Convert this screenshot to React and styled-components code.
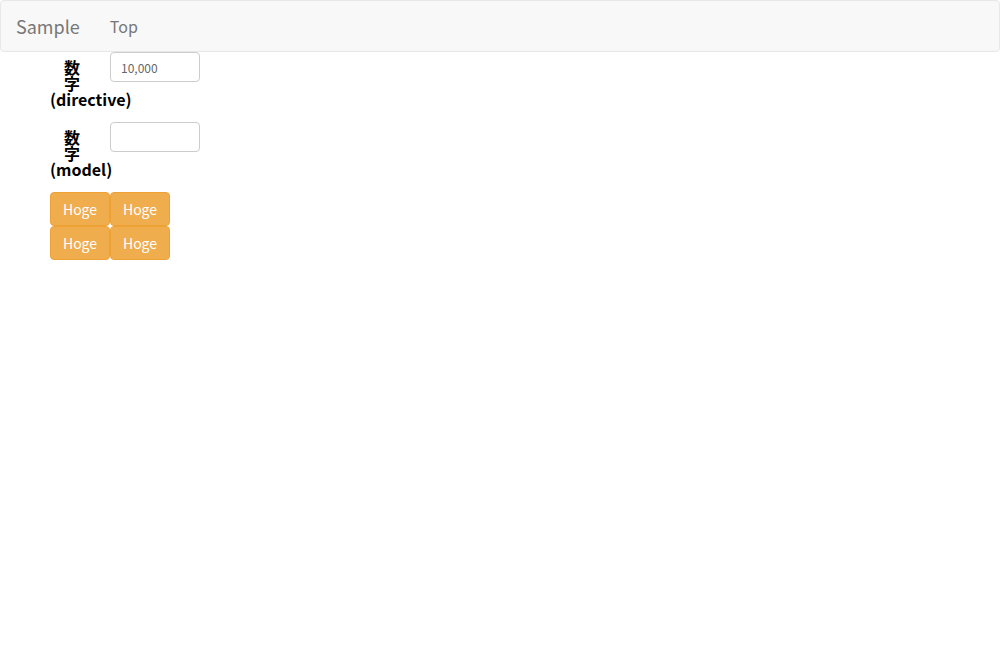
import React from "react";
import styled, { createGlobalStyle } from "styled-components";

const GlobalStyle = createGlobalStyle`
  body {
    margin: 0;
    font-family: "Noto Sans CJK JP", "Open Sans", sans-serif;
    font-size: 14px;
    color: #333;
    background: #fff;
  }
`;

const Navbar = styled.nav`
  display: flex;
  align-items: center;
  height: 50px;
  background: #f8f8f8;
  border: 1px solid #e7e7e7;
  border-radius: 4px;
`;

const Brand = styled.a`
  padding: 0 15px;
  font-size: 18px;
  line-height: 50px;
  color: #777;
  text-decoration: none;
`;

const NavLink = styled.a`
  padding: 0 15px;
  font-size: 16px;
  line-height: 50px;
  color: #777;
  text-decoration: none;
`;

const Main = styled.div`
  padding: 0 50px;
`;

const Row = styled.div`
  display: flex;
  margin-bottom: 15px;
`;

const Label = styled.label`
  flex: none;
  width: 30px;
  margin-right: 30px;
  padding-top: 7px;
  font-size: 16px;
  font-weight: 700;
  line-height: 16px;
  color: #000;
  text-align: right;
`;

const Input = styled.input`
  box-sizing: border-box;
  width: 90px;
  height: 30px;
  padding: 0 10px;
  border: 1px solid #ccc;
  border-radius: 4px;
  font-family: inherit;
  font-size: 12px;
  color: #666;
  outline: none;
`;

const ButtonGrid = styled.div`
  display: grid;
  grid-template-columns: repeat(2, 60px);
`;

const Button = styled.button`
  height: 34px;
  background: #f0ad4e;
  border: 1px solid #eea236;
  border-radius: 4px;
  color: #fff;
  font-family: inherit;
  font-size: 14px;
  padding: 0;
`;

export default function App() {
  return (
    <>
      <GlobalStyle />
      <Navbar>
        <Brand href="#">Sample</Brand>
        <NavLink href="#">Top</NavLink>
      </Navbar>
      <Main>
        <Row>
          <Label>数字(directive)</Label>
          <Input defaultValue="10,000" />
        </Row>
        <Row>
          <Label>数字(model)</Label>
          <Input />
        </Row>
        <ButtonGrid>
          {[0, 1, 2, 3].map((i) => (
            <Button key={i}>Hoge</Button>
          ))}
        </ButtonGrid>
      </Main>
    </>
  );
}
